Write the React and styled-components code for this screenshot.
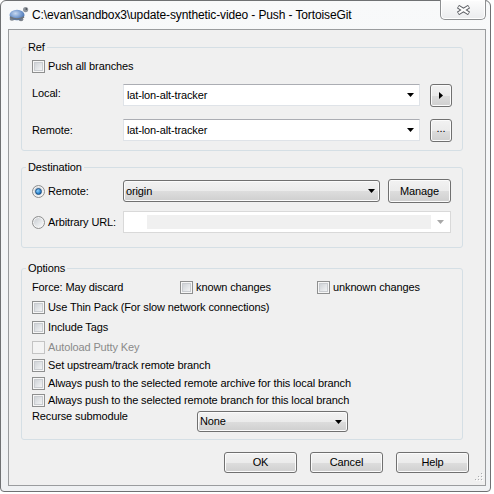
import React from 'react';
import styled, { createGlobalStyle } from 'styled-components';

const GlobalStyle = createGlobalStyle`
  html, body {
    margin: 0;
    padding: 0;
    background: #ffffff;
  }
  body {
    font-family: 'Liberation Sans', Arial, sans-serif;
    font-size: 11px;
    letter-spacing: -0.12px;
    color: #000000;
  }
`;

const Window = styled.div`
  box-sizing: border-box;
  width: 491px;
  height: 492px;
  border: 1px solid #6f7173;
  border-radius: 6px 6px 4px 4px;
  background: linear-gradient(#f8f9fa, #eff1f3);
  display: flex;
  flex-direction: column;
`;

const TitleBar = styled.div`
  height: 28px;
  display: flex;
  align-items: flex-start;
  padding-left: 6px;
  flex: none;
`;

const TitleText = styled.span`
  margin: 7px 0 0 3px;
  font-size: 12px;
  letter-spacing: -0.12px;
  line-height: 14px;
  color: #000000;
  white-space: nowrap;
`;

const CloseButton = styled.div`
  box-sizing: border-box;
  margin: -1px 4px 0 auto;
  width: 46px;
  height: 20px;
  border: 1px solid #8e9092;
  border-top: none;
  border-radius: 0 0 5px 5px;
  background: linear-gradient(#fdfdfd, #ebecee);
  box-shadow: inset 0 0 0 1px #ffffff;
  display: flex;
  align-items: center;
  justify-content: center;
`;

const Client = styled.div`
  flex: 1;
  position: relative;
  margin: 0 4px 5px 7px;
  border: 1px solid #9a9c9e;
  background: #f0f0f0;
  padding: 17px 22px 0 12px;
  display: flex;
  flex-direction: column;
`;

const Group = styled.div`
  border: 1px solid #d5dfe5;
  border-radius: 3px;
  padding: 0 10px ${p => p.$pb}px 10px;
  margin-top: ${p => p.$mt || 0}px;
  display: flex;
  flex-direction: column;
`;

const GroupTitle = styled.div`
  align-self: flex-start;
  margin: -7px 0 0 -6px;
  padding: 0 2px;
  background: #f0f0f0;
  line-height: 13px;
`;

const Row = styled.div`
  display: flex;
  align-items: ${p => p.$align || 'center'};
  height: ${p => p.$h || 16}px;
  margin-top: ${p => p.$mt || 0}px;
`;

const FieldLabel = styled.span`
  flex: none;
  width: ${p => p.$w}px;
  line-height: 13px;
  margin-bottom: ${p => p.$raise || 0}px;
  white-space: nowrap;
`;

const Option = styled.label`
  flex: none;
  display: flex;
  align-items: center;
  width: ${p => (p.$w ? `${p.$w}px` : 'auto')};
  color: ${p => (p.$disabled ? '#8a8a8a' : '#000000')};
  white-space: nowrap;
  line-height: 13px;
`;

const CheckBox = styled.span`
  box-sizing: border-box;
  flex: none;
  width: 13px;
  height: 13px;
  margin-right: 3px;
  border: 1px solid ${p => (p.$disabled ? '#c4c4c4' : '#8e8f8f')};
  background: ${p =>
    p.$disabled
      ? '#f4f4f4'
      : 'linear-gradient(135deg, #c6cacf 0%, #e9ebed 65%, #fbfbfb 100%)'};
  box-shadow: ${p =>
    p.$disabled ? 'none' : 'inset 0 0 0 1px #f6f6f6, inset 0 0 0 2px #c9ccd0'};
`;

const Radio = styled.span`
  box-sizing: border-box;
  flex: none;
  width: 13px;
  height: 13px;
  margin-right: 3px;
  border-radius: 50%;
  border: 1px solid #8e8f8f;
  background: linear-gradient(135deg, #c4c8cd 0%, #eceef0 70%, #fdfdfd 100%);
  box-shadow: inset 0 0 0 1px #f4f4f4;
  display: flex;
  align-items: center;
  justify-content: center;

  &::after {
    content: '';
    display: ${p => (p.$checked ? 'block' : 'none')};
    width: 5px;
    height: 5px;
    border-radius: 50%;
    border: 1px solid #1b4f82;
    background: radial-gradient(circle at 35% 35%, #8fd2ff 0%, #2c83cc 60%, #134e8a 100%);
  }
`;

const EditCombo = styled.div`
  box-sizing: border-box;
  flex: none;
  width: ${p => p.$w}px;
  height: 22px;
  border: 1px solid #dfe3e8;
  border-top-color: #abadb3;
  background: #ffffff;
  display: flex;
  align-items: center;
  padding-left: 3px;
`;

const DropCombo = styled.div`
  box-sizing: border-box;
  flex: none;
  width: ${p => p.$w}px;
  height: ${p => p.$h || 22}px;
  margin-top: ${p => p.$mt || 0}px;
  border: 1px solid #707070;
  border-radius: 3px;
  background: linear-gradient(#f2f2f2 0%, #ebebeb 50%, #dddddd 51%, #cfcfcf 100%);
  box-shadow: inset 0 0 0 1px #fbfbfb;
  display: flex;
  align-items: center;
  padding-left: 2px;
`;

const DisabledCombo = styled.div`
  box-sizing: border-box;
  flex: none;
  width: ${p => p.$w}px;
  height: 22px;
  border: 1px solid #d9d9d9;
  background: #ffffff;
  display: flex;
  align-items: center;
  padding-left: 23px;
`;

const UrlFill = styled.div`
  flex: 1;
  height: 14px;
  background: #f0f0f0;
`;

const ComboText = styled.span`
  flex: 1;
  line-height: 13px;
  white-space: nowrap;
`;

const ArrowBox = styled.span`
  flex: none;
  width: ${p => p.$w || 17}px;
  display: flex;
  justify-content: center;
  align-items: center;
`;

const Button = styled.div`
  box-sizing: border-box;
  flex: none;
  width: ${p => p.$w}px;
  height: ${p => p.$h}px;
  margin-left: ${p => p.$ml || 0}px;
  border: 1px solid #707070;
  border-radius: 3px;
  background: linear-gradient(#f2f2f2 0%, #ebebeb 50%, #dddddd 51%, #cfcfcf 100%);
  box-shadow: inset 0 0 0 1px #fbfbfb;
  display: flex;
  align-items: center;
  justify-content: center;
  line-height: 13px;
`;

const Ellipsis = styled.span`
  margin-top: -4px;
  letter-spacing: 0;
`;

const ButtonBar = styled.div`
  display: flex;
  justify-content: flex-end;
  gap: 13px;
  margin-top: 12px;
  margin-right: -6px;
`;

const Grip = styled.svg`
  position: absolute;
  right: 2px;
  bottom: 2px;
`;

const Arrow = ({ color = '#000000' }) => (
  <svg width="7" height="4" viewBox="0 0 7 4">
    <polygon points="0,0 7,0 3.5,4" fill={color} />
  </svg>
);

const TurtleIcon = () => (
  <svg width="22" height="16" viewBox="0 0 22 16" style={{ marginTop: 5 }}>
    <defs>
      <radialGradient id="shell" cx="40%" cy="35%" r="70%">
        <stop offset="0%" stopColor="#c7d8f0" />
        <stop offset="60%" stopColor="#6f95cc" />
        <stop offset="100%" stopColor="#3f6aa8" />
      </radialGradient>
    </defs>
    <ellipse cx="5" cy="13" rx="2.4" ry="1.8" fill="#7d838b" />
    <ellipse cx="14" cy="13.5" rx="2.4" ry="1.8" fill="#7d838b" />
    <ellipse cx="10" cy="9" rx="7.5" ry="5.2" fill="url(#shell)" />
    <path d="M3 11 Q10 15 17 11" stroke="#6f747b" strokeWidth="1.6" fill="none" />
    <circle cx="18.6" cy="3.6" r="2.6" fill="#8e949c" />
    <circle cx="19.3" cy="3" r="0.8" fill="#30343a" />
  </svg>
);

const CloseGlyph = () => (
  <svg width="15" height="10" viewBox="0 0 15 10">
    <line x1="2" y1="1.5" x2="13" y2="8.5" stroke="#5f6166" strokeWidth="4" />
    <line x1="13" y1="1.5" x2="2" y2="8.5" stroke="#5f6166" strokeWidth="4" />
    <line x1="2.6" y1="1.9" x2="12.4" y2="8.1" stroke="#ffffff" strokeWidth="2" />
    <line x1="12.4" y1="1.9" x2="2.6" y2="8.1" stroke="#ffffff" strokeWidth="2" />
  </svg>
);

const Check = ({ children, disabled, w }) => (
  <Option $disabled={disabled} $w={w}>
    <CheckBox $disabled={disabled} />
    {children}
  </Option>
);

export default function App() {
  return (
    <>
      <GlobalStyle />
      <Window>
        <TitleBar>
          <TurtleIcon />
          <TitleText>{'C:\\evan\\sandbox3\\update-synthetic-video - Push - TortoiseGit'}</TitleText>
          <CloseButton>
            <CloseGlyph />
          </CloseButton>
        </TitleBar>

        <Client>
          <Group $pb={9}>
            <GroupTitle>Ref</GroupTitle>
            <Row $mt={4}>
              <Check>Push all branches</Check>
            </Row>
            <Row $mt={10} $h={22}>
              <FieldLabel $w={91} $raise={4}>Local:</FieldLabel>
              <EditCombo $w={297}>
                <ComboText>lat-lon-alt-tracker</ComboText>
                <ArrowBox><Arrow /></ArrowBox>
              </EditCombo>
              <Button $w={22} $h={23} $ml={10}>
                <svg width="4" height="7" viewBox="0 0 4 7">
                  <polygon points="0,0 4,3.5 0,7" fill="#000000" />
                </svg>
              </Button>
            </Row>
            <Row $mt={13} $h={22}>
              <FieldLabel $w={91}>Remote:</FieldLabel>
              <EditCombo $w={297}>
                <ComboText>lat-lon-alt-tracker</ComboText>
                <ArrowBox><Arrow /></ArrowBox>
              </EditCombo>
              <Button $w={22} $h={23} $ml={10}>
                <Ellipsis>...</Ellipsis>
              </Button>
            </Row>
          </Group>

          <Group $mt={16} $pb={14}>
            <GroupTitle>Destination</GroupTitle>
            <Row $mt={5} $h={24}>
              <Option $w={91}>
                <Radio $checked />
                Remote:
              </Option>
              <DropCombo $w={257}>
                <ComboText>origin</ComboText>
                <ArrowBox $w={15}><Arrow /></ArrowBox>
              </DropCombo>
              <Button $w={63} $h={24} $ml={8}>Manage</Button>
            </Row>
            <Row $mt={8} $h={22}>
              <Option $w={91}>
                <Radio />
                Arbitrary URL:
              </Option>
              <DisabledCombo $w={328}>
                <UrlFill />
                <ArrowBox $w={19}><Arrow color="#a8a8a8" /></ArrowBox>
              </DisabledCombo>
            </Row>
          </Group>

          <Group $mt={20} $pb={7}>
            <GroupTitle>Options</GroupTitle>
            <Row $mt={4}>
              <FieldLabel $w={148}>Force: May discard</FieldLabel>
              <Check w={137}>known changes</Check>
              <Check>unknown changes</Check>
            </Row>
            <Row $mt={4}>
              <Check>Use Thin Pack (For slow network connections)</Check>
            </Row>
            <Row $mt={4}>
              <Check>Include Tags</Check>
            </Row>
            <Row $mt={4}>
              <Check disabled>Autoload Putty Key</Check>
            </Row>
            <Row $mt={2}>
              <Check>Set upstream/track remote branch</Check>
            </Row>
            <Row $mt={2}>
              <Check>Always push to the selected remote archive for this local branch</Check>
            </Row>
            <Row $mt={1}>
              <Check>Always push to the selected remote branch for this local branch</Check>
            </Row>
            <Row $mt={2} $h={22} $align="flex-start">
              <FieldLabel $w={165}>Recurse submodule</FieldLabel>
              <DropCombo $w={151} $h={21} $mt={1}>
                <ComboText>None</ComboText>
                <ArrowBox><Arrow /></ArrowBox>
              </DropCombo>
            </Row>
          </Group>

          <ButtonBar>
            <Button $w={73} $h={21}>OK</Button>
            <Button $w={73} $h={21}>Cancel</Button>
            <Button $w={73} $h={21}>Help</Button>
          </ButtonBar>

          <Grip width="10" height="10" viewBox="0 0 10 10">
            {[[8, 0], [8, 3], [5, 3], [8, 6], [5, 6], [2, 6]].map(([x, y]) => (
              <g key={`${x}-${y}`}>
                <rect x={x + 1} y={y + 1} width="1" height="1" fill="#ffffff" />
                <rect x={x} y={y} width="1" height="1" fill="#a9abae" />
              </g>
            ))}
          </Grip>
        </Client>
      </Window>
    </>
  );
}
